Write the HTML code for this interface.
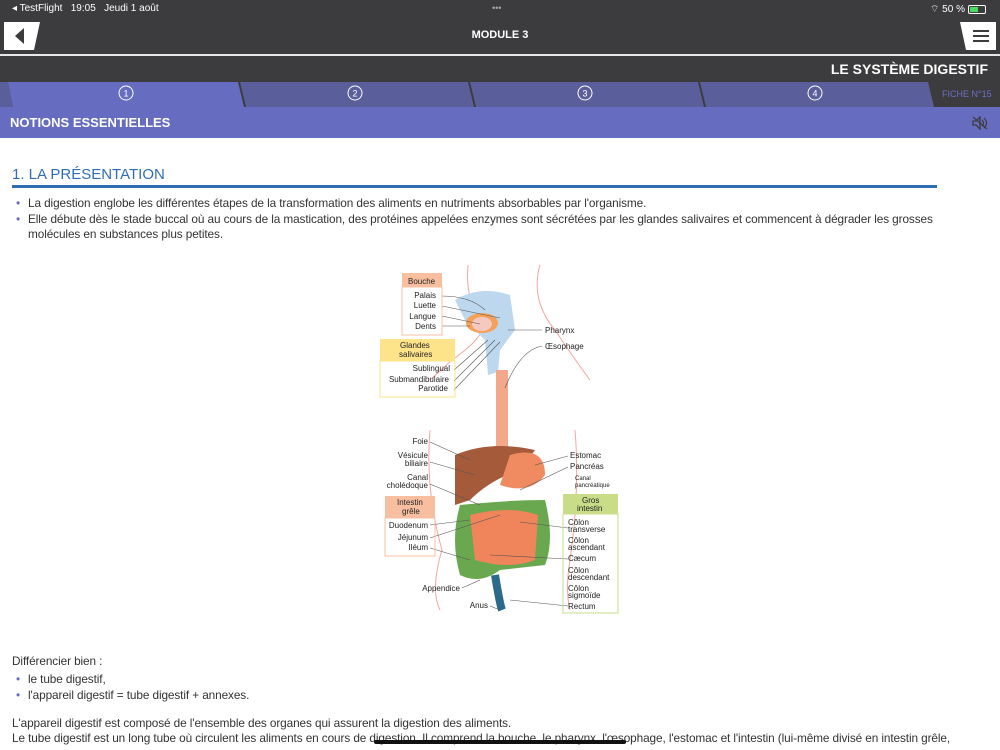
<!DOCTYPE html>
<html><head><meta charset="utf-8"><style>
*{margin:0;padding:0;box-sizing:border-box}
body{width:1000px;height:750px;overflow:hidden;background:#fff;font-family:"Liberation Sans",sans-serif;position:relative}
.top{position:absolute;left:0;top:0;width:1000px;height:82px;background:#3c3c3e}
.st{position:absolute;top:3px;font-size:10px;color:#fff}
.hdr{position:absolute;left:0;top:54px;width:1000px;height:28px;background:#3c3c3e;border-top:2px solid #e8e8e8}
.tabs{position:absolute;left:0;top:82px;width:1000px;height:25px;background:#3c3c3e}
.ne{position:absolute;left:0;top:107px;width:1000px;height:31px;background:#666cbf;color:#fff;font-weight:bold;font-size:13px;line-height:31px;padding-left:10px}
.c{position:absolute;left:12px;font-size:11.8px;color:#333;letter-spacing:-0.1px}
ul{list-style:none}
li{position:relative;padding-left:16px}
li:before{content:"•";color:#666cbf;position:absolute;left:4px}
</style></head><body>
<div class="top">
<div class="st" style="left:12px">◂ TestFlight &nbsp; 19:05 &nbsp; Jeudi 1 août</div>
<div class="st" style="left:492px;font-size:9px;color:#aaa">•••</div>
<div class="st" style="left:930px">⌔ 50 % <span style="display:inline-block;width:18px;height:9px;border:1px solid #fff;border-radius:2px;vertical-align:middle;position:relative"><span style="position:absolute;left:1px;top:1px;width:8px;height:5px;background:#4cd964"></span></span></div>
<svg style="position:absolute;left:4px;top:22px" width="36" height="28"><polygon points="0,0 36,0 30,28 0,28" fill="#fff"/><polygon points="20,6 20,22 11,14" fill="#3c3c3e"/></svg>
<div style="position:absolute;left:0;width:1000px;top:29px;text-align:center;color:#fff;font-weight:bold;font-size:11px">MODULE 3</div>
<svg style="position:absolute;left:960px;top:22px" width="36" height="28"><polygon points="0,0 36,0 36,28 6,28" fill="#fff"/><rect x="13" y="8" width="16" height="2" fill="#3c3c3e"/><rect x="13" y="13" width="16" height="2" fill="#3c3c3e"/><rect x="13" y="18" width="16" height="2" fill="#3c3c3e"/></svg>
</div>
<div class="hdr"><div style="position:absolute;right:12px;top:5px;color:#fff;font-weight:bold;font-size:14px">LE SYSTÈME DIGESTIF</div></div>
<svg class="tabs" width="1000" height="25">
<polygon points="0,0 8,0 13,25 0,25" fill="#5a5f9b"/>
<polygon points="8,0 238,0 244,25 13,25" fill="#666cbf"/>
<polygon points="240,0 468,0 474,25 246,25" fill="#5a5f9b"/>
<polygon points="470,0 698,0 704,25 476,25" fill="#5a5f9b"/>
<polygon points="700,0 928,0 934,25 706,25" fill="#5a5f9b"/>
<g fill="none" stroke="#fff" stroke-width="1"><circle cx="126" cy="11" r="7"/><circle cx="355" cy="11" r="7"/><circle cx="585" cy="11" r="7"/><circle cx="815" cy="11" r="7"/></g>
<g fill="#fff" font-size="9" text-anchor="middle" font-family="Liberation Sans"><text x="126" y="14.5">1</text><text x="355" y="14.5">2</text><text x="585" y="14.5">3</text><text x="815" y="14.5">4</text></g>
<text x="942" y="15" fill="#6a70c4" font-size="9" font-family="Liberation Sans">FICHE N°15</text>
</svg>
<div class="ne">NOTIONS ESSENTIELLES
<svg style="position:absolute;right:12px;top:9px" width="16" height="14"><path d="M1 5h3l4-4v12l-4-4H1z" fill="none" stroke="#3c3c3e" stroke-width="1.3"/><path d="M10 4q3 3 0 6M12 2q5 5 0 10" fill="none" stroke="#3c3c3e" stroke-width="1.2"/><path d="M1 1l14 12" stroke="#3c3c3e" stroke-width="1.2"/></svg></div>
<div style="position:absolute;left:12px;top:166px;color:#2f6eb5;font-size:15px">1. LA PRÉSENTATION</div>
<div style="position:absolute;left:12px;top:185px;width:925px;height:3px;background:#2f6eb5"></div>
<ul class="c" style="top:196px;width:950px;line-height:15.5px">
<li>La digestion englobe les différentes étapes de la transformation des aliments en nutriments absorbables par l'organisme.</li>
<li>Elle débute dès le stade buccal où au cours de la mastication, des protéines appelées enzymes sont sécrétées par les glandes salivaires et commencent à dégrader les grosses molécules en substances plus petites.</li>
</ul>
<svg style="position:absolute;left:370px;top:260px" width="260" height="360" font-family="Liberation Sans" font-size="8" fill="#222">
<path d="M98 5 Q95 40 110 55 Q125 70 82 100 L60 120" stroke="#f4a6a0" fill="none"/>
<path d="M170 5 Q160 40 185 70 Q205 100 220 120" stroke="#f4a6a0" fill="none"/>
<path d="M60 170 Q55 230 72 290 Q60 330 70 350" stroke="#f4a6a0" fill="none"/>
<path d="M205 170 Q210 230 200 300 Q195 330 200 350" stroke="#f4a6a0" fill="none"/>
<path d="M85 40 Q110 25 140 35 L145 70 L130 90 L128 112 L118 115 L115 80 L95 60Z" fill="#bcd7ee"/>
<ellipse cx="112" cy="63" rx="16" ry="10" fill="#f4a15a"/><ellipse cx="112" cy="64" rx="10" ry="7" fill="#f5c9c0"/>
<rect x="126" y="110" width="12" height="80" fill="#f4a88a"/>
<path d="M85 195 Q120 180 165 190 L150 210 Q120 220 100 240 L85 245Z" fill="#a55a3a"/>
<path d="M140 195 Q175 185 175 215 Q160 235 130 225Z" fill="#f08a60"/>
<path d="M90 245 Q80 280 90 315 Q110 325 130 310 L175 305 Q185 280 175 240 Q140 240 90 245Z" fill="#6aa84f"/>
<path d="M100 255 Q140 245 168 255 L165 300 Q140 310 105 300Z" fill="#f0845a"/>
<path d="M125 315 Q130 345 132 350" stroke="#2a6a8a" stroke-width="8" fill="none"/>
<g stroke="#555" stroke-width="0.6" fill="none"><path d="M72 36Q100 36 115 50M72 46L130 58M72 56L110 64M72 66L100 66M84 110L118 80M84 121L125 80M84 130L130 82M138 70L172 70M135 128Q150 90 172 86M60 182L100 200M60 202L105 215M60 224L110 245M60 265L100 260M60 278L130 255M60 288L100 300M92 328L110 320M120 346L130 350M198 196L165 205M198 207L150 230M198 268L150 262M198 299L120 295M198 346L140 340"/></g>
<g text-anchor="end"><text x="66" y="38">Palais</text><text x="66" y="48">Luette</text><text x="66" y="59">Langue</text><text x="66" y="69">Dents</text>
<text x="80" y="111">Sublingual</text><text x="79" y="122">Submandibulaire</text><text x="78" y="131">Parotide</text>
<text x="58" y="184">Foie</text><text x="58" y="198">Vésicule</text><text x="58" y="206">biliaire</text><text x="58" y="220">Canal</text><text x="58" y="228">cholédoque</text>
<text x="58" y="268">Duodenum</text><text x="58" y="280">Jéjunum</text><text x="58" y="290">Iléum</text><text x="90" y="331">Appendice</text><text x="118" y="348">Anus</text></g>
<text x="175" y="73">Pharynx</text><text x="175" y="89">Œsophage</text><text x="200" y="198">Estomac</text><text x="200" y="209">Pancréas</text>
<text x="205" y="220" font-size="6">Canal</text><text x="205" y="227" font-size="6">pancréatique</text>
<text x="198" y="265">Côlon</text><text x="198" y="272">transverse</text><text x="198" y="283">Côlon</text><text x="198" y="290">ascendant</text><text x="198" y="301">Cæcum</text>
<text x="198" y="313">Côlon</text><text x="198" y="320">descendant</text><text x="198" y="331">Côlon</text><text x="198" y="338">sigmoïde</text><text x="198" y="349">Rectum</text>
<rect x="32" y="13" width="40" height="14" fill="#f7bfa0"/><text x="38" y="24">Bouche</text>
<rect x="32" y="27" width="40" height="48" fill="none" stroke="#f7bfa0"/>
<rect x="10" y="79" width="75" height="22" fill="#fde38a"/><text x="30" y="88">Glandes</text><text x="29" y="97">salivaires</text>
<rect x="10" y="101" width="75" height="36" fill="none" stroke="#fde38a"/>
<rect x="15" y="236" width="50" height="22" fill="#f7bfa0"/><text x="27" y="245">Intestin</text><text x="32" y="254">grêle</text>
<rect x="15" y="258" width="50" height="38" fill="none" stroke="#f7bfa0"/>
<rect x="193" y="234" width="55" height="20" fill="#c9dd88"/><text x="212" y="243">Gros</text><text x="207" y="251">intestin</text>
<rect x="193" y="254" width="55" height="99" fill="none" stroke="#c9dd88"/>
</svg>
<div class="c" style="top:654px">Différencier bien :</div>
<ul class="c" style="top:671px;line-height:16px"><li>le tube digestif,</li><li>l'appareil digestif = tube digestif + annexes.</li></ul>
<div class="c" style="top:716px">L'appareil digestif est composé de l'ensemble des organes qui assurent la digestion des aliments.</div>
<div class="c" style="top:731px;width:980px;white-space:nowrap">Le tube digestif est un long tube où circulent les aliments en cours de digestion. Il comprend la bouche, le pharynx, l'œsophage, l'estomac et l'intestin (lui-même divisé en intestin grêle,</div>
<div style="position:absolute;left:374px;top:740px;width:252px;height:4px;border-radius:2px;background:#111"></div>
</body></html>
